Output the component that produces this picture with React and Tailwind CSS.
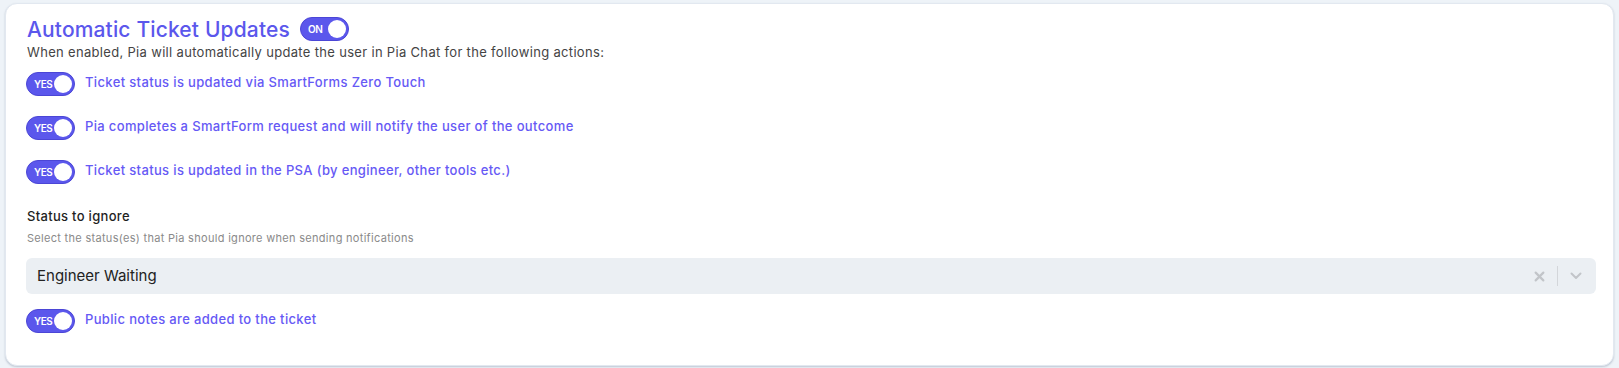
import { useState } from 'react';

function Toggle({ on, label, onClick }) {
  return (
    <button
      onClick={onClick}
      className={`relative flex h-[24px] w-[49px] shrink-0 items-center rounded-full border border-[#4b46d6] transition ${on ? 'bg-[#5b57ec]' : 'bg-gray-300'}`}
    >
      <span className={`absolute text-[10px] font-semibold tracking-[-0.5px] text-white ${on ? 'left-[7px]' : 'right-[7px]'}`}>{label}</span>
      <span className={`absolute top-[2px] h-[18px] w-[18px] rounded-full bg-white transition ${on ? 'left-[27px]' : 'left-[2px]'}`} />
    </button>
  );
}

function OptionRow({ text, value, onToggle }) {
  return (
    <div className="flex items-center gap-[10px]">
      <Toggle on={value} label={value ? 'YES' : 'NO'} onClick={onToggle} />
      <span className="-mt-[3px] text-[13px] font-medium tracking-[0.35px] text-[#6659f5]">{text}</span>
    </div>
  );
}

export default function App() {
  const [enabled, setEnabled] = useState(true);
  const [opts, setOpts] = useState({ zeroTouch: true, smartForm: true, psa: true, publicNotes: true });
  const [status, setStatus] = useState('Engineer Waiting');

  const flip = (k) => setOpts({ ...opts, [k]: !opts[k] });

  return (
    <div className="min-h-screen bg-[#eef3f8] px-[5px] pt-[3px]" style={{ fontFamily: 'Inter, "Noto Sans", sans-serif' }}>
      <div className="flex flex-col rounded-[12px] border border-[#e2e8f0] bg-white pt-[13px] pb-[32px] pl-[20px] pr-[17px] shadow-[0_1px_2px_rgba(100,116,139,0.35)]">
        <div className="flex h-[24px] items-center gap-[10px] pl-[1px]">
          <h1 className="text-[21px] font-medium leading-none tracking-[0.15px] text-[#5b57ec]">Automatic Ticket Updates</h1>
          <Toggle on={enabled} label={enabled ? 'ON' : 'OFF'} onClick={() => setEnabled(!enabled)} />
        </div>
        <p className="mt-[2px] pl-[1px] text-[13px] leading-[18px] tracking-[0.32px] text-[#444]">
          When enabled, Pia will automatically update the user in Pia Chat for the following actions:
        </p>

        <div className="mt-[11px] flex flex-col gap-[20px]">
          <OptionRow text="Ticket status is updated via SmartForms Zero Touch" value={opts.zeroTouch} onToggle={() => flip('zeroTouch')} />
          <OptionRow text="Pia completes a SmartForm request and will notify the user of the outcome" value={opts.smartForm} onToggle={() => flip('smartForm')} />
          <OptionRow text="Ticket status is updated in the PSA (by engineer, other tools etc.)" value={opts.psa} onToggle={() => flip('psa')} />
        </div>

        <h3 className="mt-[22px] pl-[1px] text-[13px] font-medium leading-[20px] tracking-[0.3px] text-[#1f1f1f]">Status to ignore</h3>
        <p className="mt-[4px] pl-[1px] text-[11px] leading-[16px] tracking-[0.3px] text-[#8a8a8a]">Select the status(es) that Pia should ignore when sending notifications</p>

        <div className="mt-[12px] flex h-[36px] items-center rounded-[6px] bg-[#ebeff3] pl-[11px] pr-[10px]">
          <span className="flex-1 text-[15px] text-[#222]">{status}</span>
          <button onClick={() => setStatus('')} className="flex h-[20px] w-[20px] items-center justify-center text-[#c2c5c9]">
            <svg width="11" height="11" viewBox="0 0 10 10" stroke="currentColor" strokeWidth="2" strokeLinecap="round">
              <path d="M1.5 1.5l7 7M8.5 1.5l-7 7" />
            </svg>
          </button>
          <span className="mx-[8px] h-[20px] w-px bg-[#d3d6da]" />
          <span className="flex h-[20px] w-[20px] items-center justify-center text-[#c2c5c9]">
            <svg width="12" height="8" viewBox="0 0 12 8" fill="none" stroke="currentColor" strokeWidth="2" strokeLinecap="round" strokeLinejoin="round">
              <path d="M1.5 1.5L6 6l4.5-4.5" />
            </svg>
          </span>
        </div>

        <div className="mt-[15px]">
          <OptionRow text="Public notes are added to the ticket" value={opts.publicNotes} onToggle={() => flip('publicNotes')} />
        </div>
      </div>
    </div>
  );
}
